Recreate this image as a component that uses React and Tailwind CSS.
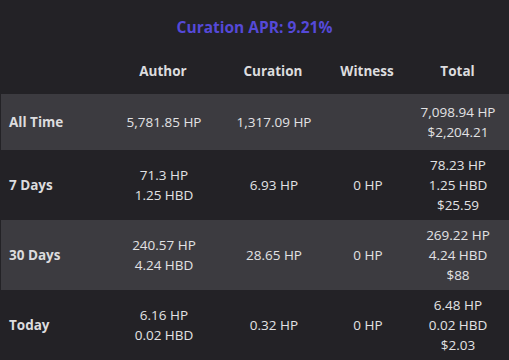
const rows = [
  {
    label: 'All Time',
    author: ['5,781.85 HP'],
    curation: ['1,317.09 HP'],
    witness: [],
    total: ['7,098.94 HP', '$2,204.21'],
    h: 'h-[56px]',
    bg: 'bg-[#3c3b40]',
  },
  {
    label: '7 Days',
    author: ['71.3 HP', '1.25 HBD'],
    curation: ['6.93 HP'],
    witness: ['0 HP'],
    total: ['78.23 HP', '1.25 HBD', '$25.59'],
    h: 'h-[70px]',
    bg: 'bg-[#232226]',
  },
  {
    label: '30 Days',
    author: ['240.57 HP', '4.24 HBD'],
    curation: ['28.65 HP'],
    witness: ['0 HP'],
    total: ['269.22 HP', '4.24 HBD', '$88'],
    h: 'h-[70px]',
    bg: 'bg-[#3c3b40]',
  },
  {
    label: 'Today',
    author: ['6.16 HP', '0.02 HBD'],
    curation: ['0.32 HP'],
    witness: ['0 HP'],
    total: ['6.48 HP', '0.02 HBD', '$2.03'],
    h: 'h-[70px]',
    bg: 'bg-[#232226]',
  },
]

const cols = 'grid grid-cols-[108px_110px_110px_78px_1fr] items-center'

function Cell({ lines }) {
  return (
    <div className="flex flex-col items-center leading-[20px]">
      {lines.map((l) => (
        <span key={l}>{l}</span>
      ))}
    </div>
  )
}

export default function App() {
  return (
    <div
      className="h-[360px] w-[509px] overflow-hidden bg-[#232226] text-[13.5px] text-[#e2e2e4]"
      style={{ fontFamily: '"Open Sans", "Liberation Sans", sans-serif' }}
    >
      <div className="flex h-[54px] items-center justify-center pt-[2px] text-[15.5px] font-bold text-[#5549d8]">
        Curation APR: 9.21%
      </div>
      <div className={`${cols} h-[40px] pb-[6px] font-bold text-[#dcdcde]`}>
        <div />
        <div className="text-center">Author</div>
        <div className="text-center">Curation</div>
        <div className="text-center">Witness</div>
        <div className="text-center">Total</div>
      </div>
      <div className="ml-px">
        {rows.map((r) => (
          <div key={r.label} className={`${cols} ${r.h} ${r.bg}`}>
            <div className="pl-2 font-bold text-[#dcdcde]">{r.label}</div>
            <Cell lines={r.author} />
            <Cell lines={r.curation} />
            <Cell lines={r.witness} />
            <Cell lines={r.total} />
          </div>
        ))}
      </div>
    </div>
  )
}
